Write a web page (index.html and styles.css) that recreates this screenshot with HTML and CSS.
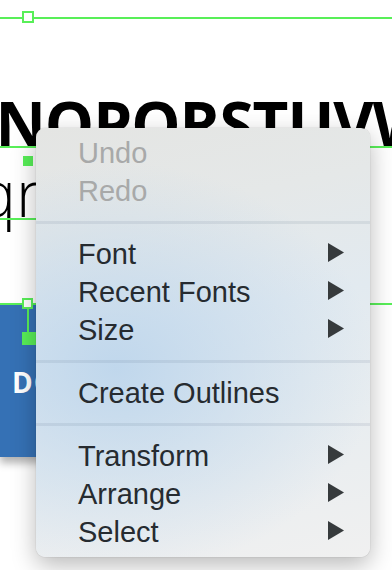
FILE: index.html
```html
<!DOCTYPE html>
<html>
<head>
    <meta charset="utf-8">
    <link rel="stylesheet" href="styles.css">
</head>
<body>
    <main class="artboard">
        <div class="guide guide-top">
            <span class="handle handle-top"></span>
        </div>
        <div class="headline">MNOPQRSTUVWXYZ</div>
        <div class="guide"></div>
        <div class="dot"></div>
        <div class="subline">qrstuvw</div>
        <div class="guide guide-short"></div>

        <div class="guide guide-button"></div>
        <div class="button-frame">
            <div class="blue-box">DOWNLOAD</div>
            <span class="handle handle-button"></span>
            <span class="stem"></span>
            <span class="dot dot-button"></span>
        </div>

        <ul class="context-menu">
            <li class="item disabled"><span>Undo</span></li>
            <li class="item disabled"><span>Redo</span></li>
            <li class="separator"></li>
            <li class="item"><span>Font</span><svg class="arrow" viewBox="0 0 16 19"><polygon points="0,0 16,9.5 0,19"/></svg></li>
            <li class="item"><span>Recent Fonts</span><svg class="arrow" viewBox="0 0 16 19"><polygon points="0,0 16,9.5 0,19"/></svg></li>
            <li class="item"><span>Size</span><svg class="arrow" viewBox="0 0 16 19"><polygon points="0,0 16,9.5 0,19"/></svg></li>
            <li class="separator"></li>
            <li class="item"><span>Create Outlines</span></li>
            <li class="separator"></li>
            <li class="item"><span>Transform</span><svg class="arrow" viewBox="0 0 16 19"><polygon points="0,0 16,9.5 0,19"/></svg></li>
            <li class="item"><span>Arrange</span><svg class="arrow" viewBox="0 0 16 19"><polygon points="0,0 16,9.5 0,19"/></svg></li>
            <li class="item"><span>Select</span><svg class="arrow" viewBox="0 0 16 19"><polygon points="0,0 16,9.5 0,19"/></svg></li>
        </ul>
    </main>
</body>
</html>
```

FILE: styles.css
```css
* {
    box-sizing: border-box;
}
body {
    margin: 0;
    background: #ffffff;
    overflow: hidden;
}
.artboard {
    position: relative;
    width: 392px;
    height: 570px;
    overflow: hidden;
    padding-top: 17px;
    font-family: "Open Sans", sans-serif;
}

/* selection guides */
.guide {
    position: relative;
    height: 2px;
    background: #58ef58;
}
.guide-short {
    width: 300px;
}
.handle {
    position: absolute;
    width: 12px;
    height: 12px;
    border: 2px solid #58ef58;
    background: #ffffff;
}
.handle-top {
    left: 22px;
    top: -6px;
}
.dot {
    width: 10px;
    height: 10px;
    margin: 8px 0 0 23px;
    background: #58ef58;
}

/* text frames */
.headline {
    height: 54px;
    margin-top: 73px;
    margin-left: -62px;
    font-weight: 700;
    font-size: 62px;
    line-height: 62px;
    white-space: nowrap;
    color: #000;
    letter-spacing: -1px;
}
.subline {
    height: 52px;
    margin-left: -22px;
    font-weight: 300;
    font-size: 64px;
    line-height: 54px;
    white-space: nowrap;
    color: #000;
}

/* button on canvas */
.guide-button {
    margin-top: 83px;
    z-index: 2;
}
.button-frame {
    position: relative;
    margin-top: -1px;
}
.blue-box {
    width: 220px;
    height: 153px;
    padding: 64px 0 0 12px;
    background: #3571b5;
    color: #ffffff;
    font-weight: 700;
    font-size: 28px;
    line-height: 28px;
    letter-spacing: 1px;
    white-space: nowrap;
    overflow: hidden;
    box-shadow: 0 6px 8px rgba(0, 0, 0, 0.3);
}
.handle-button {
    left: 22px;
    top: -6px;
    width: 11px;
    height: 11px;
    z-index: 3;
}
.stem {
    position: absolute;
    left: 27px;
    top: 4px;
    width: 2px;
    height: 25px;
    background: #58ef58;
}
.dot-button {
    position: absolute;
    left: 22px;
    top: 28px;
    width: 14px;
    height: 13px;
    margin: 0;
}

/* context menu */
.context-menu {
    position: absolute;
    z-index: 10;
    left: 36px;
    top: 128px;
    width: 334px;
    margin: 0;
    padding: 6px 0;
    list-style: none;
    border-radius: 9px;
    font-family: "Helvetica Neue", "Liberation Sans", Arial, sans-serif;
    font-size: 29px;
    color: #262b30;
    background:
        radial-gradient(ellipse 78% 48% at 24% 56%, rgba(190, 214, 236, 0.95), rgba(190, 214, 236, 0) 100%),
        linear-gradient(168deg, #e4e5e3 0%, #e5e8e8 22%, #e2eaf0 45%, #e8edf0 70%, #f0f0f0 100%);
    box-shadow: 0 8px 24px rgba(0, 0, 0, 0.28), 0 0 1px rgba(0, 0, 0, 0.35);
}
.item {
    display: flex;
    justify-content: space-between;
    align-items: center;
    height: 38px;
    line-height: 38px;
    padding: 0 26px 0 42px;
}
.item.disabled {
    color: #a8a9a9;
}
.arrow {
    width: 16px;
    height: 19px;
    fill: #363a3c;
    margin-top: -3px;
}
.separator {
    height: 3px;
    margin: 11px 0;
    background: rgba(40, 70, 95, 0.09);
}
```
